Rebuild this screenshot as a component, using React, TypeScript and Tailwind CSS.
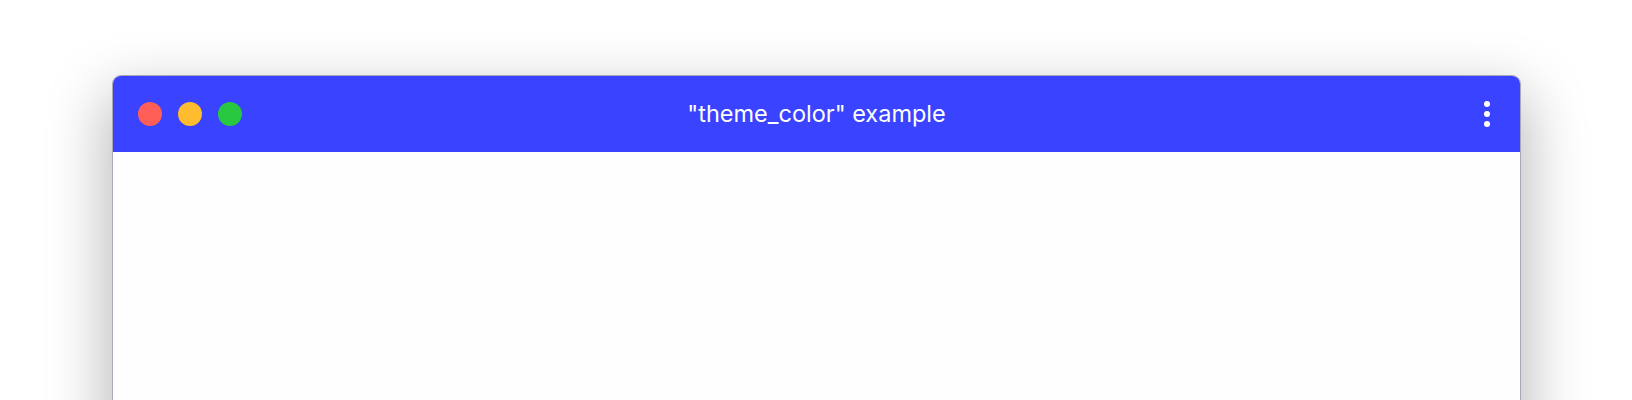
import React from "react";

export default function App() {
  return (
    <div className="w-[1632px] h-[400px] overflow-hidden bg-white pt-[75px] pl-[112px]" style={{ fontFamily: "Inter, 'Noto Sans', sans-serif" }}>
      <div className="w-[1409px] h-[420px] rounded-t-[9px] border border-[#a9a9b4] bg-[#fefefe] shadow-[0_24px_60px_6px_rgba(0,0,0,0.28)] overflow-hidden">
        <div className="h-[76px] bg-[#3a43ff] grid grid-cols-[1fr_auto_1fr] items-center px-[25px]">
          <div className="flex gap-[16px]">
            <span className="w-[24px] h-[24px] rounded-full bg-[#ff5f57]" />
            <span className="w-[24px] h-[24px] rounded-full bg-[#febc2e]" />
            <span className="w-[24px] h-[24px] rounded-full bg-[#28c840]" />
          </div>
          <div className="text-center text-white text-[23.5px] leading-none">"theme_color" example</div>
          <div className="flex justify-end">
            <div className="flex flex-col gap-[4px] mr-[5px]">
              <span className="w-[6px] h-[6px] rounded-full bg-white" />
              <span className="w-[6px] h-[6px] rounded-full bg-white" />
              <span className="w-[6px] h-[6px] rounded-full bg-white" />
            </div>
          </div>
        </div>
      </div>
    </div>
  );
}
